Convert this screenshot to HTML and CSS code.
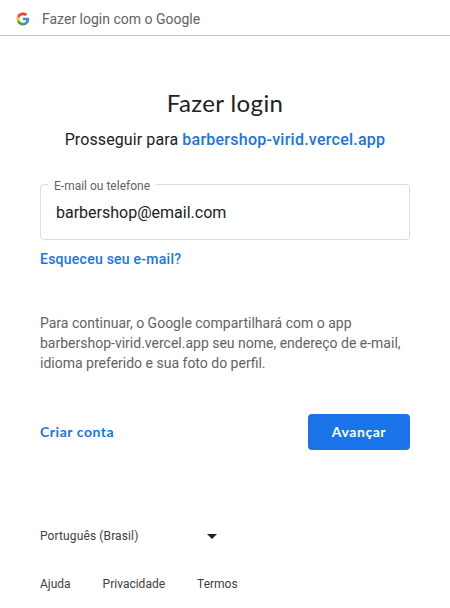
FILE: index.html
```html
<!DOCTYPE html>
<html lang="pt-BR">
<head>
<meta charset="utf-8">
<title>Fazer login</title>
<link rel="stylesheet" href="styles.css">
</head>
<body>
<header class="topbar">
  <svg class="logo" viewBox="0 0 48 48" aria-hidden="true">
    <path fill="#4285F4" d="M45.12 24.5c0-1.56-.14-3.06-.4-4.5H24v8.51h11.84c-.51 2.75-2.06 5.08-4.39 6.64v5.52h7.11c4.16-3.83 6.56-9.47 6.56-16.17z"/>
    <path fill="#34A853" d="M24 46c5.94 0 10.92-1.97 14.56-5.33l-7.11-5.52c-1.97 1.32-4.49 2.1-7.45 2.1-5.73 0-10.58-3.87-12.31-9.07H4.34v5.7C7.96 41.07 15.4 46 24 46z"/>
    <path fill="#FBBC05" d="M11.69 28.18C11.25 26.86 11 25.45 11 24s.25-2.86.69-4.18v-5.7H4.34A21.99 21.99 0 0 0 2 24c0 3.55.85 6.91 2.34 9.88l7.35-5.7z"/>
    <path fill="#EA4335" d="M24 10.75c3.23 0 6.13 1.11 8.41 3.29l6.31-6.31C34.91 4.18 29.93 2 24 2 15.4 2 7.96 6.93 4.34 14.12l7.35 5.7c1.73-5.2 6.58-9.07 12.31-9.07z"/>
  </svg>
  <span>Fazer login com o Google</span>
</header>
<main class="content">
  <h1>Fazer login</h1>
  <p class="subtitle">Prosseguir para <a href="#">barbershop-virid.vercel.app</a></p>
  <fieldset class="field">
    <legend>E-mail ou telefone</legend>
    <input type="email" value="barbershop@email.com" aria-label="E-mail ou telefone">
  </fieldset>
  <a class="forgot" href="#">Esqueceu seu e-mail?</a>
  <p class="notice">Para continuar, o Google compartilhará com o app barbershop-virid.vercel.app seu nome, endereço de e-mail, idioma preferido e sua foto do perfil.</p>
  <div class="actions">
    <a class="create" href="#">Criar conta</a>
    <button class="next">Avançar</button>
  </div>
</main>
<footer class="footer">
  <div class="language"><span>Português (Brasil)</span><svg class="caret" viewBox="0 0 10 5"><path d="M0 0h10L5 5z"/></svg></div>
  <nav class="links"><a href="#">Ajuda</a><a href="#">Privacidade</a><a href="#">Termos</a></nav>
</footer>
</body>
</html>
```
FILE: styles.css
```css
* { box-sizing: border-box; }
body { margin: 0; height: 608px; overflow: hidden; background: #fff; color: #202124; font-family: Roboto, "Liberation Sans", sans-serif; }
a { color: #1a73e8; text-decoration: none; font-weight: 500; }
.topbar { display: flex; align-items: center; gap: 12px; height: 36px; padding: 2px 16px 0; border-bottom: 1px solid #c7c9cc; color: #5f6368; font-size: 14px; }
.logo { width: 14px; height: 14px; }
.content { padding: 51px 40px 0; }
h1 { margin: 0; font: 400 24px/32px Lato, sans-serif; text-align: center; letter-spacing: .4px; }
.subtitle { margin: 9px 0 0; font-size: 16px; line-height: 24px; text-align: center; letter-spacing: .1px; }
.subtitle a { letter-spacing: .25px; }
.field { display: flex; align-items: flex-start; width: 370px; height: 64px; margin: 24px 0 0; padding: 0 15px; border: 1px solid #dadce0; border-radius: 4px; }
.field legend { margin-left: -8px; padding: 3px 6px 0; color: #5f6368; font-size: 12px; line-height: 14px; }
.field input { width: 100%; height: 38px; padding: 0; border: 0; outline: 0; background: transparent; color: #202124; font: 16px Roboto, sans-serif; }
.forgot { display: block; margin-top: 9px; font-size: 14px; line-height: 20px; letter-spacing: .25px; }
.notice { margin: 44px 0 0; color: #5f6368; font-size: 14px; line-height: 20px; }
.actions { display: flex; align-items: center; justify-content: space-between; height: 36px; margin-top: 41px; font: 14px/20px Lato, sans-serif; }
.create { padding-bottom: 1px; font-weight: 700; letter-spacing: .55px; }
.next { width: 102px; height: 36px; padding: 0 0 1px; border: 0; border-radius: 4px; background: #1a73e8; color: #fff; font: 700 14px/20px Lato, sans-serif; letter-spacing: .55px; }
.footer { padding: 78px 40px 0; color: #3c4043; font-size: 12px; line-height: 16px; }
.language { display: flex; align-items: center; justify-content: space-between; width: 177px; letter-spacing: .12px; }
.caret { width: 10px; height: 5px; fill: #202124; }
.links { display: flex; gap: 32px; margin-top: 32px; }
.links a { color: #3c4043; font-weight: 400; }
```
